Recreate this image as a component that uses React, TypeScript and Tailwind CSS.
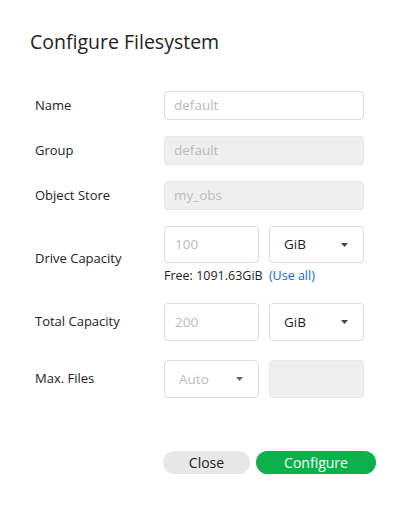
import React from 'react';

function Caret({ muted }: { muted?: boolean }) {
  return (
    <svg width="7" height="4" viewBox="0 0 7 4" className="shrink-0">
      <path d="M0 0 L7 0 L3.5 4 Z" fill={muted ? '#666' : '#444'} />
    </svg>
  );
}

function Row({ label, children, className = '' }: { label: string; children: React.ReactNode; className?: string }) {
  return (
    <div className={`flex items-center ${className}`}>
      <span className="w-[129px] shrink-0 text-[13px] text-[#222]">{label}</span>
      {children}
    </div>
  );
}

export default function App() {
  return (
    <main
      className="w-[411px] h-[511px] bg-white relative"
      style={{ fontFamily: '"Open Sans", "Noto Sans", sans-serif' }}
    >
      <div className="pl-[30px] pt-[29px]">
        <h1 className="text-[19.5px] leading-[26px] text-[#222]">Configure Filesystem</h1>
      </div>

      <div className="pl-[35px] pt-[36px]">
        <Row label="Name">
          <div className="w-[200px] h-[29px] border border-[#ddd] rounded-[4px] px-[9px] flex items-center text-[13.5px] text-[#bbb]">
            default
          </div>
        </Row>

        <Row label="Group" className="mt-[16px]">
          <div className="w-[200px] h-[29px] border border-[#e6e6e6] bg-[#efefef] rounded-[4px] px-[9px] flex items-center text-[13.5px] text-[#bbb]">
            default
          </div>
        </Row>

        <Row label="Object Store" className="mt-[16px]">
          <div className="w-[200px] h-[29px] border border-[#e6e6e6] bg-[#efefef] rounded-[4px] px-[9px] flex items-center text-[13.5px] text-[#bbb]">
            my_obs
          </div>
        </Row>

        <div className="flex items-center mt-[16px]">
          <span className="w-[129px] shrink-0 text-[13px] text-[#222] pt-[8px]">Drive Capacity</span>
          <div className="flex flex-col">
            <div className="flex gap-[10px]">
              <div className="w-[95px] h-[37px] border border-[#ddd] rounded-[4px] px-[10px] flex items-center text-[13.5px] text-[#bbb]">
                100
              </div>
              <div className="w-[95px] h-[37px] border border-[#ddd] rounded-[4px] pl-[14px] pr-[15px] flex items-center justify-between text-[13.5px] text-[#222]">
                <span>GiB</span>
                <Caret />
              </div>
            </div>
            <div className="text-[12.5px] leading-[17px] mt-[4px] text-[#222]">
              Free: 1091.63GiB <span className="text-[#0b6bcb] ml-[3px]">(Use all)</span>
            </div>
          </div>
        </div>

        <Row label="Total Capacity" className="mt-[19px]">
          <div className="flex gap-[10px]">
            <div className="w-[95px] h-[38px] border border-[#ddd] rounded-[4px] px-[10px] flex items-center text-[13.5px] text-[#bbb]">
              200
            </div>
            <div className="w-[95px] h-[38px] border border-[#ddd] rounded-[4px] pl-[14px] pr-[15px] flex items-center justify-between text-[13.5px] text-[#222]">
              <span>GiB</span>
              <Caret />
            </div>
          </div>
        </Row>

        <Row label="Max. Files" className="mt-[19px]">
          <div className="flex gap-[10px]">
            <div className="w-[95px] h-[38px] border border-[#ddd] rounded-[4px] pl-[14px] pr-[15px] flex items-center justify-between text-[13.5px] text-[#bbb]">
              <span>Auto</span>
              <Caret muted />
            </div>
            <div className="w-[95px] h-[38px] border border-[#e6e6e6] bg-[#efefef] rounded-[4px]" />
          </div>
        </Row>
      </div>

      <div className="flex gap-[6px] pl-[163px] mt-[53px]">
        <button className="w-[87px] h-[23px] rounded-full bg-[#e8e8e8] text-[14px] text-[#222] leading-none">
          Close
        </button>
        <button className="w-[120px] h-[23px] rounded-full bg-[#0db14b] text-[14px] text-white leading-none">
          Configure
        </button>
      </div>
    </main>
  );
}
